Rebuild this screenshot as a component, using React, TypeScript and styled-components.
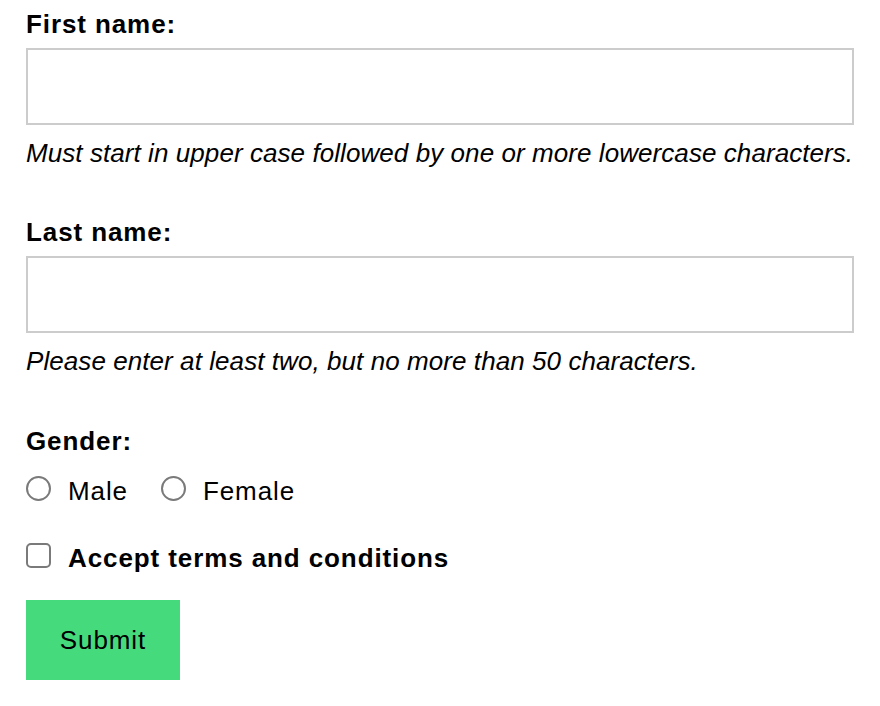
import React from 'react';
import styled, { createGlobalStyle } from 'styled-components';

const GlobalStyle = createGlobalStyle`
  html, body {
    margin: 0;
    padding: 0;
    background: #ffffff;
  }
  body {
    font-family: "Liberation Sans", Helvetica, Arial, sans-serif;
    font-size: 26px;
    color: #000000;
  }
`;

const Form = styled.form`
  display: flex;
  flex-direction: column;
  padding: 9px 26px 0 26px;
`;

const Field = styled.div<{ gapAfter?: number }>`
  display: flex;
  flex-direction: column;
  margin-bottom: ${props => props.gapAfter ?? 0}px;
`;

const Label = styled.label<{ spaceBelow?: number }>`
  display: block;
  font-weight: 700;
  line-height: 30px;
  letter-spacing: 0.9px;
  margin-bottom: ${props => props.spaceBelow ?? 9}px;
`;

const TextInput = styled.input`
  box-sizing: border-box;
  width: 100%;
  height: 77px;
  border: 2px solid #cccccc;
  border-radius: 0;
  padding: 0 12px;
  font: inherit;
  background: #ffffff;
  outline: none;
`;

const Hint = styled.small`
  display: block;
  font-size: 26px;
  font-style: italic;
  line-height: 30px;
  letter-spacing: 0.07px;
  margin-top: 13px;
`;

const RadioRow = styled.div`
  display: flex;
  align-items: center;
  gap: 33px;
  height: 30px;
`;

const Option = styled.label`
  display: flex;
  align-items: center;
  gap: 17px;
  line-height: 30px;
  letter-spacing: 0.9px;
`;

const Radio = styled.input.attrs({ type: 'radio' })`
  appearance: none;
  box-sizing: border-box;
  width: 25px;
  height: 25px;
  margin: 0 0 5px 0;
  border: 2px solid #7a7a7a;
  border-radius: 50%;
  background: #ffffff;
`;

const Checkbox = styled.input.attrs({ type: 'checkbox' })`
  appearance: none;
  box-sizing: border-box;
  width: 25px;
  height: 25px;
  margin: 0 0 5px 0;
  border: 2px solid #7a7a7a;
  border-radius: 5px;
  background: #ffffff;
`;

const CheckLabel = styled(Option)`
  font-weight: 700;
`;

const SubmitButton = styled.button`
  align-self: flex-start;
  width: 154px;
  height: 80px;
  border: none;
  border-radius: 0;
  background: #45db7c;
  color: #000000;
  font: inherit;
  letter-spacing: 0.9px;
  cursor: pointer;
`;

export default function App() {
  return (
    <>
      <GlobalStyle />
      <Form onSubmit={(e) => e.preventDefault()}>
        <Field gapAfter={49}>
          <Label htmlFor="first">First name:</Label>
          <TextInput id="first" type="text" />
          <Hint>Must start in upper case followed by one or more lowercase characters.</Hint>
        </Field>

        <Field gapAfter={50}>
          <Label htmlFor="last">Last name:</Label>
          <TextInput id="last" type="text" />
          <Hint>Please enter at least two, but no more than 50 characters.</Hint>
        </Field>

        <Field gapAfter={37}>
          <Label as="div" spaceBelow={20}>Gender:</Label>
          <RadioRow>
            <Option>
              <Radio name="gender" value="male" />
              Male
            </Option>
            <Option>
              <Radio name="gender" value="female" />
              Female
            </Option>
          </RadioRow>
        </Field>

        <Field gapAfter={27}>
          <CheckLabel>
            <Checkbox />
            Accept terms and conditions
          </CheckLabel>
        </Field>

        <SubmitButton type="submit">Submit</SubmitButton>
      </Form>
    </>
  );
}
